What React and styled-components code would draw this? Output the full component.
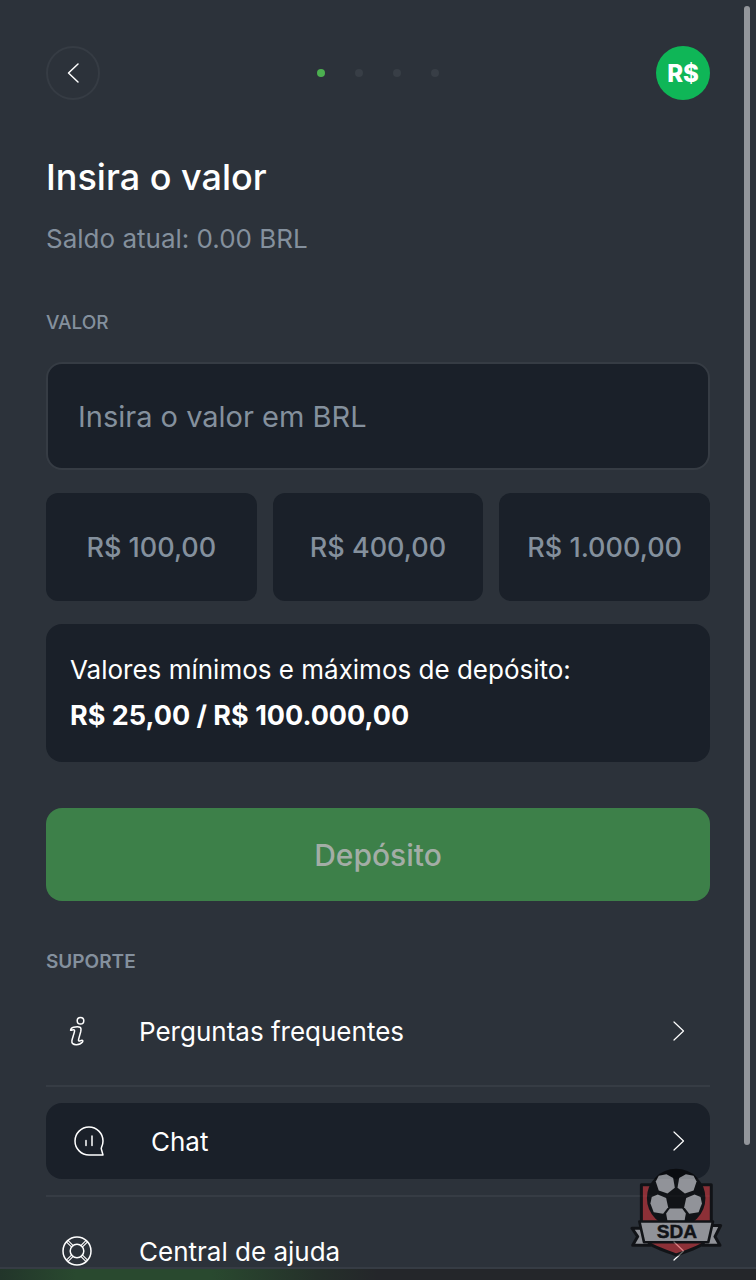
import React, { useState } from 'react'
import styled, { createGlobalStyle, css } from 'styled-components'

const PRESETS = ['R$ 100,00', 'R$ 400,00', 'R$ 1.000,00']

function InfoIcon() {
    return (
        <Icon viewBox="0 0 32 32" aria-hidden="true">
            <circle cx="19.5" cy="5.8" r="3.3" />
            <path d="M9.600 15.200c.2-1.500 1.300-2.700 2.900-3 2.300-.4 5.300-.8 6.700.2 1.300 1 .9 2.700.5 4.300l-2 7.200c-.4 1.500-.2 2.200.5 2.200.9 0 1.700-.7 2.700-.9 1 0 1.200 1 .6 1.800-1.500 1.800-3.800 2.800-6.400 2.700-3 0-4.600-1.400-4.200-4.100.2-1.400 2.300-7.400 2.600-9.200.2-1.200-.1-1.600-.9-1.600-1.100 0-1.900.5-3 .4z" />
        </Icon>
    )
}

function ChatIcon() {
    return (
        <Icon viewBox="0 0 32 32" aria-hidden="true">
            <path d="M16 30A14 14 0 1 1 30 16c0 2-.4 4.200-1.500 6.300-.5 1-.3 1.700.1 2.700L30 30z" />
            <path d="M13 15.500v5M19 11v9.500" />
        </Icon>
    )
}

function HelpIcon() {
    return (
        <Icon viewBox="0 0 32 32" aria-hidden="true">
            <circle cx="16" cy="16" r="14" />
            <circle cx="16" cy="16" r="6.800" />
            <path d="M5.400 6.900l5.300 5.300M6.900 5.400l5.300 5.300M26.600 6.900l-5.300 5.300M25.100 5.400l-5.300 5.300M5.400 25.100l5.300-5.300M6.900 26.600l5.300-5.300M26.600 25.100l-5.300-5.300M25.100 26.600l-5.300-5.300" strokeWidth="1.100" />
        </Icon>
    )
}

function ClubBadge() {
    return (
        <Badge viewBox="94 236 278 266" role="img" aria-label="SDA">
            <g stroke="#000" strokeWidth="9" strokeLinejoin="round">
                <path d="M128 286h209v151c-12 28-58 42-104 59-47-17-93-31-105-59z" fill="#cd3036" />
                <circle cx="232" cy="326" r="83" fill="#000" />
                <path d="M100 416h34l20 51h-52l15-26z" fill="#d4d4d8" />
                <path d="M365 408h-34l-20 59h52l-15-26z" fill="#d4d4d8" />
            </g>
            <g fill="#d4d4d8">
                <path d="M203 255l20 11 5 29-22 17-26-9-9-27 9-17z" />
                <path d="M261 255l-20 11-5 29 22 17 26-9 9-27-9-17z" />
                <path d="M177 315l25 11 6 27-15 20-28-5-10-26 4-19z" />
                <path d="M287 315l-25 11-6 27 15 20 28-5 10-26-4-19z" />
                <path d="M213 357h37l11 15-4 22h-51l-4-22z" />
            </g>
            <path d="M122 396h220l-14 62H136z" fill="#d4d4d8" stroke="#000" strokeWidth="8" strokeLinejoin="round" />
            <BadgeText x="234" y="446" textAnchor="middle">SDA</BadgeText>
        </Badge>
    )
}

const LINKS = [
    { label: 'Perguntas frequentes', icon: InfoIcon },
    { label: 'Chat', icon: ChatIcon, active: true },
    { label: 'Central de ajuda', icon: HelpIcon },
]

function App() {
    const [amount, setAmount] = useState('')

    return (
        <Screen>
            <GlobalStyle />
            <Sheet>
                <Header>
                    <BackButton type="button" aria-label="Voltar">
                        <Chevron viewBox="0 0 24 24" $weight={1.5} aria-hidden="true">
                            <path d="M17 3L7.500 12l9.500 9" />
                        </Chevron>
                    </BackButton>
                    <Steps>
                        {[0, 1, 2, 3].map(step => <Dot key={step} $current={step === 0} />)}
                    </Steps>
                    <Currency>R$</Currency>
                </Header>

                <Title>Insira o valor</Title>
                <Balance>Saldo atual: 0.00 BRL</Balance>

                <FieldLabel htmlFor="amount">VALOR</FieldLabel>
                <AmountInput
                    id="amount"
                    inputMode="decimal"
                    placeholder="Insira o valor em BRL"
                    value={amount}
                    onChange={e => setAmount(e.target.value)}
                />
                <Presets>
                    {PRESETS.map(preset => (
                        <PresetButton key={preset} type="button" onClick={() => setAmount(preset)}>
                            {preset}
                        </PresetButton>
                    ))}
                </Presets>

                <Limits>
                    <p>Valores mínimos e máximos de depósito:</p>
                    <strong>R$ 25,00 / R$ 100.000,00</strong>
                </Limits>

                <DepositButton type="button" disabled={!amount}>Depósito</DepositButton>

                <SupportTitle>SUPORTE</SupportTitle>
                <SupportList>
                    {LINKS.map(({ label, icon: LinkIcon, active }) => (
                        <SupportItem key={label}>
                            <SupportLink href="#" $active={active}>
                                <LinkIcon />
                                <span>{label}</span>
                                <Chevron viewBox="0 0 24 24" $weight={1.2} aria-hidden="true">
                                    <path d="M7 3l9.500 9L7 21" />
                                </Chevron>
                            </SupportLink>
                        </SupportItem>
                    ))}
                </SupportList>
            </Sheet>
            <BottomEdge />
            <ScrollThumb />
            <ClubBadge />
        </Screen>
    )
}

export default App

const GlobalStyle = createGlobalStyle`
    * {
        box-sizing: border-box;
    }

    body {
        margin: 0;
        background: #2c323a;
        color: #fff;
        font-family: Inter, "Liberation Sans", sans-serif;
    }

    button, input {
        font-family: inherit;
    }

    p, h1, h2, ul {
        margin: 0;
        padding: 0;
    }
`

const Screen = styled.div`
    position: relative;
    height: 100vh;
    display: flex;
    flex-direction: column;
    overflow: hidden;
`

const Sheet = styled.main`
    flex: 1;
    min-height: 0;
    overflow: hidden;
    display: flex;
    flex-direction: column;
    padding: 46px 46px 0;

    > * {
        flex-shrink: 0;
    }
`

const Header = styled.header`
    display: flex;
    align-items: center;
    justify-content: space-between;
`

const BackButton = styled.button`
    display: flex;
    align-items: center;
    justify-content: center;
    width: 54px;
    height: 54px;
    padding: 0;
    border: 2px solid #363c44;
    border-radius: 50%;
    background: transparent;
    color: #fff;
    cursor: pointer;
`

const Chevron = styled.svg`
    width: 24px;
    height: 24px;
    fill: none;
    stroke: currentColor;
    stroke-width: ${props => props.$weight};
    stroke-linecap: round;
    stroke-linejoin: round;
`

const Steps = styled.div`
    display: flex;
    gap: 30px;
`

const Dot = styled.span`
    width: 8px;
    height: 8px;
    border-radius: 50%;
    background: ${props => (props.$current ? '#4caf50' : '#383e46')};
`

const Currency = styled.div`
    display: flex;
    align-items: center;
    justify-content: center;
    width: 54px;
    height: 54px;
    border-radius: 50%;
    background: #0fb657;
    font-size: 24px;
    font-weight: 800;
`

const Title = styled.h1`
    margin-top: 54px;
    font-size: 36px;
    font-weight: 500;
    line-height: 46px;
`

const Balance = styled.p`
    margin-top: 23px;
    color: #84909d;
    font-size: 26px;
    line-height: 32px;
`

const labelText = css`
    color: #84909d;
    font-size: 19px;
    line-height: 24px;
`

const FieldLabel = styled.label`
    ${labelText}
    margin-top: 56px;
    font-weight: 500;
`

const AmountInput = styled.input`
    height: 108px;
    margin-top: 27px;
    padding: 0 30px;
    border: 2px solid #363c44;
    border-radius: 16px;
    outline: none;
    background: #1a2029;
    color: #fff;
    font-size: 29px;

    &::placeholder {
        color: #84909d;
        opacity: 1;
    }
`

const Presets = styled.div`
    display: grid;
    grid-template-columns: repeat(3, 1fr);
    gap: 16px;
    margin-top: 23px;
`

const PresetButton = styled.button`
    height: 108px;
    padding: 0;
    border: 0;
    border-radius: 12px;
    background: #1a2029;
    color: #84909d;
    font-size: 27px;
    font-weight: 500;
    cursor: pointer;
`

const Limits = styled.section`
    margin-top: 23px;
    padding: 23px 24px;
    border-radius: 16px;
    background: #1a2029;
    font-size: 26px;
    line-height: 46px;

    strong {
        display: block;
        font-size: 27px;
        font-weight: 700;
    }
`

const DepositButton = styled.button`
    height: 93px;
    margin-top: 46px;
    border: 0;
    border-radius: 16px;
    background: #3d8049;
    color: #a3ada6;
    font-size: 30px;
    font-weight: 500;
`

const SupportTitle = styled.h2`
    ${labelText}
    margin-top: 49px;
    font-weight: 600;
`

const SupportList = styled.ul`
    margin-top: 3px;
    list-style: none;
`

const SupportItem = styled.li`
    padding: 16px 0;
    border-bottom: 2px solid #363c44;
`

const SupportLink = styled.a`
    display: flex;
    align-items: center;
    gap: 46px;
    height: 76px;
    padding: 0 19px 0 ${props => (props.$active ? '27px' : '15px')};
    border-radius: 16px;
    background: ${props => (props.$active ? '#1a2029' : 'transparent')};
    color: #fff;
    font-size: 26px;
    text-decoration: none;

    span {
        flex: 1;
    }
`

const Icon = styled.svg`
    flex-shrink: 0;
    width: 32px;
    height: 32px;
    fill: none;
    stroke: currentColor;
    stroke-width: 1.5;
    stroke-linecap: round;
    stroke-linejoin: round;
`

const BottomEdge = styled.footer`
    height: 13px;
    border-top: 2px solid #363c44;
    background: linear-gradient(90deg, #22352a 0%, #29492f 10%, #29492f 28%, #25302a 42%, #24262a 50%);
`

const ScrollThumb = styled.div`
    position: absolute;
    top: 6px;
    right: 6px;
    width: 6px;
    height: 89%;
    border-radius: 3px;
    background: #93969b;
`

const Badge = styled.svg`
    position: absolute;
    right: 33px;
    bottom: 23px;
    width: 93px;
    height: 89px;
    opacity: 0.6;
`

const BadgeText = styled.text`
    fill: #000;
    stroke: #000;
    stroke-width: 1.5;
    font-size: 57px;
    font-weight: 700;
    font-family: "Liberation Sans", sans-serif;
`
